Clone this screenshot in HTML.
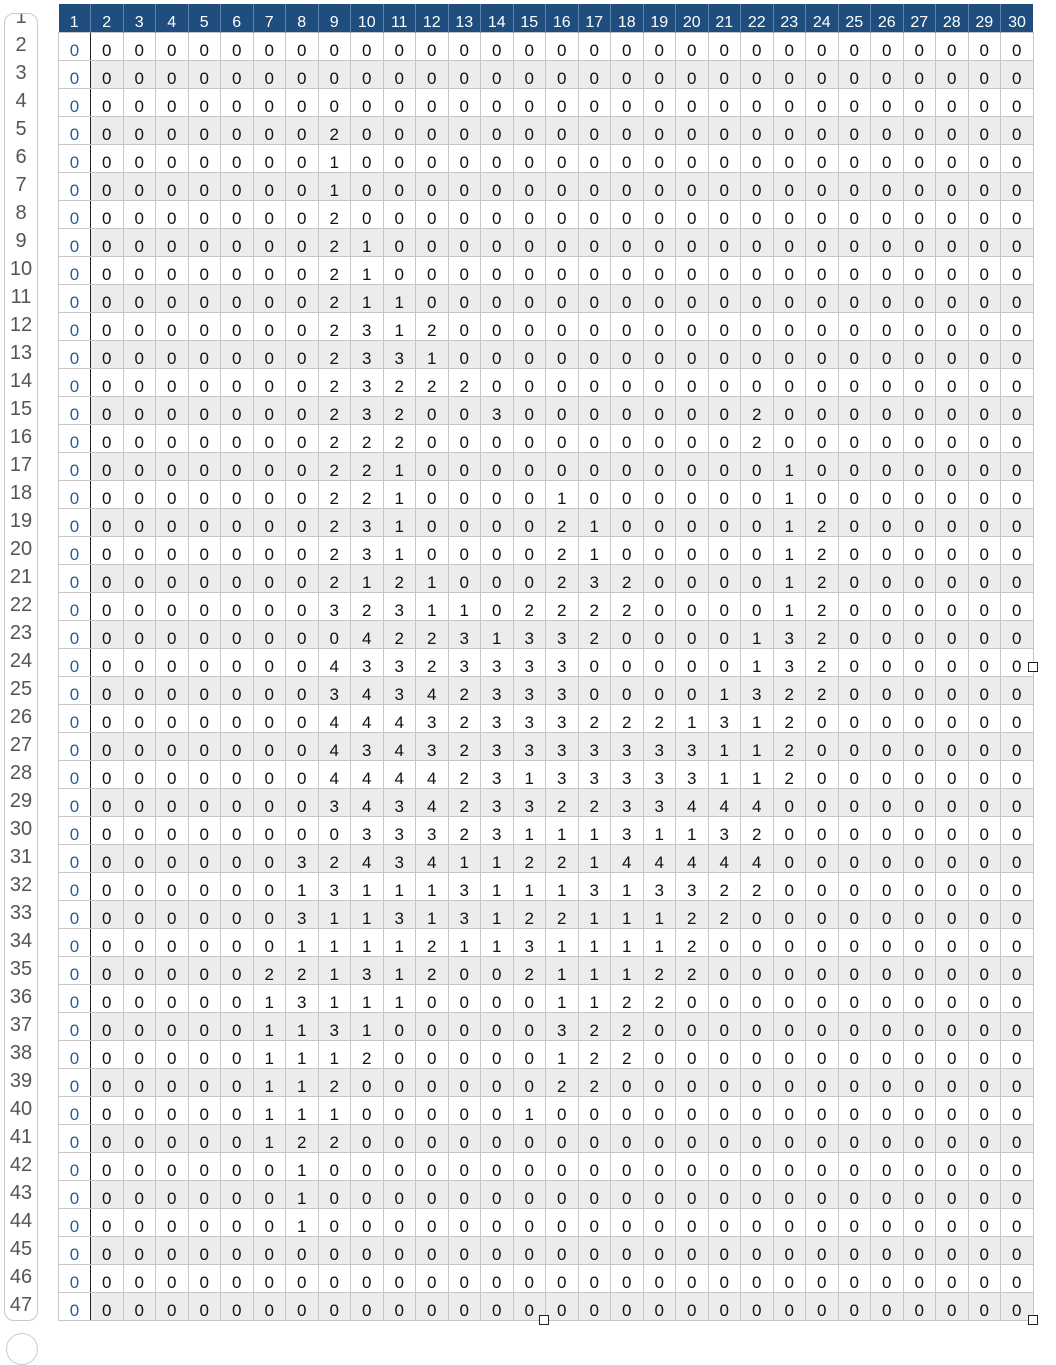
<!DOCTYPE html>
<html><head><meta charset="utf-8"><style>
html,body{margin:0;padding:0;background:#fff;width:1056px;height:1340px;overflow:hidden;font-family:"Liberation Sans",Arial,sans-serif;}
#side{position:absolute;left:4px;top:13px;width:32px;height:1306px;border:1px solid #c9c9c9;border-radius:10px;overflow:hidden;background:#fff;}
#side div{position:absolute;left:0;width:32px;text-align:center;font-size:20px;line-height:24px;color:#555;}
table{position:absolute;left:58px;top:4px;border-collapse:collapse;table-layout:fixed;width:975px;}
td,th{border:1px solid #c6c6c6;padding:0;text-align:center;font-size:17px;color:#111;height:28px;line-height:18px;padding-top:9px;box-sizing:border-box;overflow:hidden;white-space:nowrap;}
th{background:#1e4d7e;color:#fff;font-weight:normal;font-size:16px;height:28px;border:none;border-left:1px solid #5d84ad;padding-top:10px;line-height:16px;}
th:first-child{border-left:none;}
tr:nth-child(odd) td{background:#ececec;}
td:first-child{color:#2b5d93;background:#fff!important;border-right:1px solid #222;}
.h{position:absolute;width:10px;height:10px;border:1px solid #222;background:#fff;box-sizing:border-box;}
</style></head><body>
<div id="side">
<div style="top:-9px">1</div><div style="top:19px">2</div><div style="top:47px">3</div><div style="top:75px">4</div><div style="top:103px">5</div><div style="top:131px">6</div><div style="top:159px">7</div><div style="top:187px">8</div><div style="top:215px">9</div><div style="top:243px">10</div><div style="top:271px">11</div><div style="top:299px">12</div><div style="top:327px">13</div><div style="top:355px">14</div><div style="top:383px">15</div><div style="top:411px">16</div><div style="top:439px">17</div><div style="top:467px">18</div><div style="top:495px">19</div><div style="top:523px">20</div><div style="top:551px">21</div><div style="top:579px">22</div><div style="top:607px">23</div><div style="top:635px">24</div><div style="top:663px">25</div><div style="top:691px">26</div><div style="top:719px">27</div><div style="top:747px">28</div><div style="top:775px">29</div><div style="top:803px">30</div><div style="top:831px">31</div><div style="top:859px">32</div><div style="top:887px">33</div><div style="top:915px">34</div><div style="top:943px">35</div><div style="top:971px">36</div><div style="top:999px">37</div><div style="top:1027px">38</div><div style="top:1055px">39</div><div style="top:1083px">40</div><div style="top:1111px">41</div><div style="top:1139px">42</div><div style="top:1167px">43</div><div style="top:1195px">44</div><div style="top:1223px">45</div><div style="top:1251px">46</div><div style="top:1279px">47</div>
</div>
<table>
<colgroup><col style="width:32px"><col span="29" style="width:32.5px"></colgroup>
<tr><th>1<th>2<th>3<th>4<th>5<th>6<th>7<th>8<th>9<th>10<th>11<th>12<th>13<th>14<th>15<th>16<th>17<th>18<th>19<th>20<th>21<th>22<th>23<th>24<th>25<th>26<th>27<th>28<th>29<th>30</tr>
<tr><td>0<td>0<td>0<td>0<td>0<td>0<td>0<td>0<td>0<td>0<td>0<td>0<td>0<td>0<td>0<td>0<td>0<td>0<td>0<td>0<td>0<td>0<td>0<td>0<td>0<td>0<td>0<td>0<td>0<td>0</tr>
<tr><td>0<td>0<td>0<td>0<td>0<td>0<td>0<td>0<td>0<td>0<td>0<td>0<td>0<td>0<td>0<td>0<td>0<td>0<td>0<td>0<td>0<td>0<td>0<td>0<td>0<td>0<td>0<td>0<td>0<td>0</tr>
<tr><td>0<td>0<td>0<td>0<td>0<td>0<td>0<td>0<td>0<td>0<td>0<td>0<td>0<td>0<td>0<td>0<td>0<td>0<td>0<td>0<td>0<td>0<td>0<td>0<td>0<td>0<td>0<td>0<td>0<td>0</tr>
<tr><td>0<td>0<td>0<td>0<td>0<td>0<td>0<td>0<td>2<td>0<td>0<td>0<td>0<td>0<td>0<td>0<td>0<td>0<td>0<td>0<td>0<td>0<td>0<td>0<td>0<td>0<td>0<td>0<td>0<td>0</tr>
<tr><td>0<td>0<td>0<td>0<td>0<td>0<td>0<td>0<td>1<td>0<td>0<td>0<td>0<td>0<td>0<td>0<td>0<td>0<td>0<td>0<td>0<td>0<td>0<td>0<td>0<td>0<td>0<td>0<td>0<td>0</tr>
<tr><td>0<td>0<td>0<td>0<td>0<td>0<td>0<td>0<td>1<td>0<td>0<td>0<td>0<td>0<td>0<td>0<td>0<td>0<td>0<td>0<td>0<td>0<td>0<td>0<td>0<td>0<td>0<td>0<td>0<td>0</tr>
<tr><td>0<td>0<td>0<td>0<td>0<td>0<td>0<td>0<td>2<td>0<td>0<td>0<td>0<td>0<td>0<td>0<td>0<td>0<td>0<td>0<td>0<td>0<td>0<td>0<td>0<td>0<td>0<td>0<td>0<td>0</tr>
<tr><td>0<td>0<td>0<td>0<td>0<td>0<td>0<td>0<td>2<td>1<td>0<td>0<td>0<td>0<td>0<td>0<td>0<td>0<td>0<td>0<td>0<td>0<td>0<td>0<td>0<td>0<td>0<td>0<td>0<td>0</tr>
<tr><td>0<td>0<td>0<td>0<td>0<td>0<td>0<td>0<td>2<td>1<td>0<td>0<td>0<td>0<td>0<td>0<td>0<td>0<td>0<td>0<td>0<td>0<td>0<td>0<td>0<td>0<td>0<td>0<td>0<td>0</tr>
<tr><td>0<td>0<td>0<td>0<td>0<td>0<td>0<td>0<td>2<td>1<td>1<td>0<td>0<td>0<td>0<td>0<td>0<td>0<td>0<td>0<td>0<td>0<td>0<td>0<td>0<td>0<td>0<td>0<td>0<td>0</tr>
<tr><td>0<td>0<td>0<td>0<td>0<td>0<td>0<td>0<td>2<td>3<td>1<td>2<td>0<td>0<td>0<td>0<td>0<td>0<td>0<td>0<td>0<td>0<td>0<td>0<td>0<td>0<td>0<td>0<td>0<td>0</tr>
<tr><td>0<td>0<td>0<td>0<td>0<td>0<td>0<td>0<td>2<td>3<td>3<td>1<td>0<td>0<td>0<td>0<td>0<td>0<td>0<td>0<td>0<td>0<td>0<td>0<td>0<td>0<td>0<td>0<td>0<td>0</tr>
<tr><td>0<td>0<td>0<td>0<td>0<td>0<td>0<td>0<td>2<td>3<td>2<td>2<td>2<td>0<td>0<td>0<td>0<td>0<td>0<td>0<td>0<td>0<td>0<td>0<td>0<td>0<td>0<td>0<td>0<td>0</tr>
<tr><td>0<td>0<td>0<td>0<td>0<td>0<td>0<td>0<td>2<td>3<td>2<td>0<td>0<td>3<td>0<td>0<td>0<td>0<td>0<td>0<td>0<td>2<td>0<td>0<td>0<td>0<td>0<td>0<td>0<td>0</tr>
<tr><td>0<td>0<td>0<td>0<td>0<td>0<td>0<td>0<td>2<td>2<td>2<td>0<td>0<td>0<td>0<td>0<td>0<td>0<td>0<td>0<td>0<td>2<td>0<td>0<td>0<td>0<td>0<td>0<td>0<td>0</tr>
<tr><td>0<td>0<td>0<td>0<td>0<td>0<td>0<td>0<td>2<td>2<td>1<td>0<td>0<td>0<td>0<td>0<td>0<td>0<td>0<td>0<td>0<td>0<td>1<td>0<td>0<td>0<td>0<td>0<td>0<td>0</tr>
<tr><td>0<td>0<td>0<td>0<td>0<td>0<td>0<td>0<td>2<td>2<td>1<td>0<td>0<td>0<td>0<td>1<td>0<td>0<td>0<td>0<td>0<td>0<td>1<td>0<td>0<td>0<td>0<td>0<td>0<td>0</tr>
<tr><td>0<td>0<td>0<td>0<td>0<td>0<td>0<td>0<td>2<td>3<td>1<td>0<td>0<td>0<td>0<td>2<td>1<td>0<td>0<td>0<td>0<td>0<td>1<td>2<td>0<td>0<td>0<td>0<td>0<td>0</tr>
<tr><td>0<td>0<td>0<td>0<td>0<td>0<td>0<td>0<td>2<td>3<td>1<td>0<td>0<td>0<td>0<td>2<td>1<td>0<td>0<td>0<td>0<td>0<td>1<td>2<td>0<td>0<td>0<td>0<td>0<td>0</tr>
<tr><td>0<td>0<td>0<td>0<td>0<td>0<td>0<td>0<td>2<td>1<td>2<td>1<td>0<td>0<td>0<td>2<td>3<td>2<td>0<td>0<td>0<td>0<td>1<td>2<td>0<td>0<td>0<td>0<td>0<td>0</tr>
<tr><td>0<td>0<td>0<td>0<td>0<td>0<td>0<td>0<td>3<td>2<td>3<td>1<td>1<td>0<td>2<td>2<td>2<td>2<td>0<td>0<td>0<td>0<td>1<td>2<td>0<td>0<td>0<td>0<td>0<td>0</tr>
<tr><td>0<td>0<td>0<td>0<td>0<td>0<td>0<td>0<td>0<td>4<td>2<td>2<td>3<td>1<td>3<td>3<td>2<td>0<td>0<td>0<td>0<td>1<td>3<td>2<td>0<td>0<td>0<td>0<td>0<td>0</tr>
<tr><td>0<td>0<td>0<td>0<td>0<td>0<td>0<td>0<td>4<td>3<td>3<td>2<td>3<td>3<td>3<td>3<td>0<td>0<td>0<td>0<td>0<td>1<td>3<td>2<td>0<td>0<td>0<td>0<td>0<td>0</tr>
<tr><td>0<td>0<td>0<td>0<td>0<td>0<td>0<td>0<td>3<td>4<td>3<td>4<td>2<td>3<td>3<td>3<td>0<td>0<td>0<td>0<td>1<td>3<td>2<td>2<td>0<td>0<td>0<td>0<td>0<td>0</tr>
<tr><td>0<td>0<td>0<td>0<td>0<td>0<td>0<td>0<td>4<td>4<td>4<td>3<td>2<td>3<td>3<td>3<td>2<td>2<td>2<td>1<td>3<td>1<td>2<td>0<td>0<td>0<td>0<td>0<td>0<td>0</tr>
<tr><td>0<td>0<td>0<td>0<td>0<td>0<td>0<td>0<td>4<td>3<td>4<td>3<td>2<td>3<td>3<td>3<td>3<td>3<td>3<td>3<td>1<td>1<td>2<td>0<td>0<td>0<td>0<td>0<td>0<td>0</tr>
<tr><td>0<td>0<td>0<td>0<td>0<td>0<td>0<td>0<td>4<td>4<td>4<td>4<td>2<td>3<td>1<td>3<td>3<td>3<td>3<td>3<td>1<td>1<td>2<td>0<td>0<td>0<td>0<td>0<td>0<td>0</tr>
<tr><td>0<td>0<td>0<td>0<td>0<td>0<td>0<td>0<td>3<td>4<td>3<td>4<td>2<td>3<td>3<td>2<td>2<td>3<td>3<td>4<td>4<td>4<td>0<td>0<td>0<td>0<td>0<td>0<td>0<td>0</tr>
<tr><td>0<td>0<td>0<td>0<td>0<td>0<td>0<td>0<td>0<td>3<td>3<td>3<td>2<td>3<td>1<td>1<td>1<td>3<td>1<td>1<td>3<td>2<td>0<td>0<td>0<td>0<td>0<td>0<td>0<td>0</tr>
<tr><td>0<td>0<td>0<td>0<td>0<td>0<td>0<td>3<td>2<td>4<td>3<td>4<td>1<td>1<td>2<td>2<td>1<td>4<td>4<td>4<td>4<td>4<td>0<td>0<td>0<td>0<td>0<td>0<td>0<td>0</tr>
<tr><td>0<td>0<td>0<td>0<td>0<td>0<td>0<td>1<td>3<td>1<td>1<td>1<td>3<td>1<td>1<td>1<td>3<td>1<td>3<td>3<td>2<td>2<td>0<td>0<td>0<td>0<td>0<td>0<td>0<td>0</tr>
<tr><td>0<td>0<td>0<td>0<td>0<td>0<td>0<td>3<td>1<td>1<td>3<td>1<td>3<td>1<td>2<td>2<td>1<td>1<td>1<td>2<td>2<td>0<td>0<td>0<td>0<td>0<td>0<td>0<td>0<td>0</tr>
<tr><td>0<td>0<td>0<td>0<td>0<td>0<td>0<td>1<td>1<td>1<td>1<td>2<td>1<td>1<td>3<td>1<td>1<td>1<td>1<td>2<td>0<td>0<td>0<td>0<td>0<td>0<td>0<td>0<td>0<td>0</tr>
<tr><td>0<td>0<td>0<td>0<td>0<td>0<td>2<td>2<td>1<td>3<td>1<td>2<td>0<td>0<td>2<td>1<td>1<td>1<td>2<td>2<td>0<td>0<td>0<td>0<td>0<td>0<td>0<td>0<td>0<td>0</tr>
<tr><td>0<td>0<td>0<td>0<td>0<td>0<td>1<td>3<td>1<td>1<td>1<td>0<td>0<td>0<td>0<td>1<td>1<td>2<td>2<td>0<td>0<td>0<td>0<td>0<td>0<td>0<td>0<td>0<td>0<td>0</tr>
<tr><td>0<td>0<td>0<td>0<td>0<td>0<td>1<td>1<td>3<td>1<td>0<td>0<td>0<td>0<td>0<td>3<td>2<td>2<td>0<td>0<td>0<td>0<td>0<td>0<td>0<td>0<td>0<td>0<td>0<td>0</tr>
<tr><td>0<td>0<td>0<td>0<td>0<td>0<td>1<td>1<td>1<td>2<td>0<td>0<td>0<td>0<td>0<td>1<td>2<td>2<td>0<td>0<td>0<td>0<td>0<td>0<td>0<td>0<td>0<td>0<td>0<td>0</tr>
<tr><td>0<td>0<td>0<td>0<td>0<td>0<td>1<td>1<td>2<td>0<td>0<td>0<td>0<td>0<td>0<td>2<td>2<td>0<td>0<td>0<td>0<td>0<td>0<td>0<td>0<td>0<td>0<td>0<td>0<td>0</tr>
<tr><td>0<td>0<td>0<td>0<td>0<td>0<td>1<td>1<td>1<td>0<td>0<td>0<td>0<td>0<td>1<td>0<td>0<td>0<td>0<td>0<td>0<td>0<td>0<td>0<td>0<td>0<td>0<td>0<td>0<td>0</tr>
<tr><td>0<td>0<td>0<td>0<td>0<td>0<td>1<td>2<td>2<td>0<td>0<td>0<td>0<td>0<td>0<td>0<td>0<td>0<td>0<td>0<td>0<td>0<td>0<td>0<td>0<td>0<td>0<td>0<td>0<td>0</tr>
<tr><td>0<td>0<td>0<td>0<td>0<td>0<td>0<td>1<td>0<td>0<td>0<td>0<td>0<td>0<td>0<td>0<td>0<td>0<td>0<td>0<td>0<td>0<td>0<td>0<td>0<td>0<td>0<td>0<td>0<td>0</tr>
<tr><td>0<td>0<td>0<td>0<td>0<td>0<td>0<td>1<td>0<td>0<td>0<td>0<td>0<td>0<td>0<td>0<td>0<td>0<td>0<td>0<td>0<td>0<td>0<td>0<td>0<td>0<td>0<td>0<td>0<td>0</tr>
<tr><td>0<td>0<td>0<td>0<td>0<td>0<td>0<td>1<td>0<td>0<td>0<td>0<td>0<td>0<td>0<td>0<td>0<td>0<td>0<td>0<td>0<td>0<td>0<td>0<td>0<td>0<td>0<td>0<td>0<td>0</tr>
<tr><td>0<td>0<td>0<td>0<td>0<td>0<td>0<td>0<td>0<td>0<td>0<td>0<td>0<td>0<td>0<td>0<td>0<td>0<td>0<td>0<td>0<td>0<td>0<td>0<td>0<td>0<td>0<td>0<td>0<td>0</tr>
<tr><td>0<td>0<td>0<td>0<td>0<td>0<td>0<td>0<td>0<td>0<td>0<td>0<td>0<td>0<td>0<td>0<td>0<td>0<td>0<td>0<td>0<td>0<td>0<td>0<td>0<td>0<td>0<td>0<td>0<td>0</tr>
<tr><td>0<td>0<td>0<td>0<td>0<td>0<td>0<td>0<td>0<td>0<td>0<td>0<td>0<td>0<td>0<td>0<td>0<td>0<td>0<td>0<td>0<td>0<td>0<td>0<td>0<td>0<td>0<td>0<td>0<td>0</tr>
</table>
<div class="h" style="left:1028px;top:662px"></div>
<div class="h" style="left:539px;top:1315px"></div>
<div class="h" style="left:1028px;top:1315px"></div>
<div style="position:absolute;left:6px;top:1333px;width:30px;height:30px;border:1px solid #ccc;border-radius:50%;"></div>
</body></html>
